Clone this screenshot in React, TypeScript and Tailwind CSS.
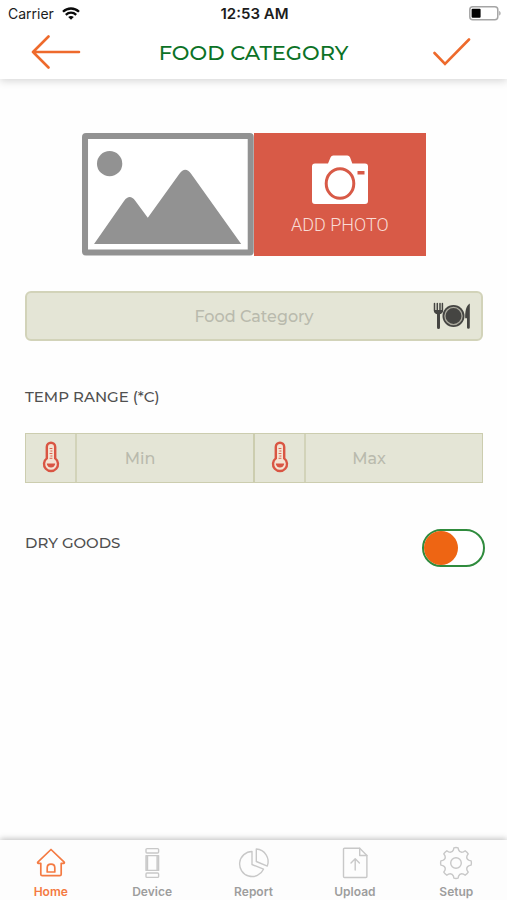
import React, { useState } from 'react';

const TABS = ['Home', 'Device', 'Report', 'Upload', 'Setup'] as const;
type Tab = (typeof TABS)[number];

/** Outline of an eight-tooth cog centred in a 34x34 box. */
const cogPath = (() => {
  const at = (deg: number, r: number) => {
    const a = ((deg - 90) * Math.PI) / 180;
    return `${(17 + r * Math.cos(a)).toFixed(2)} ${(17 + r * Math.sin(a)).toFixed(2)}`;
  };
  let d = `M${at(-8, 15.3)}`;
  for (let i = 0; i < 8; i++) {
    const t = i * 45;
    d += `Q${at(t, 15.7)} ${at(t + 8, 15.3)}L${at(t + 11, 13.4)}Q${at(t + 22.5, 10.6)} ${at(t + 34, 13.4)}L${at(t + 37, 15.3)}`;
  }
  return d + 'Z';
})();

const TabIcon: React.FC<{ tab: Tab }> = ({ tab }) => (
  <svg width="34" height="34" viewBox="0 0 34 34" fill="none" stroke="currentColor" strokeWidth="1.4" strokeLinejoin="round" strokeLinecap="round" aria-hidden="true">
    {tab === 'Home' && (
      <g strokeWidth="1.7">
        <path d="M17 3.5 3.8 16.2c-.4.4-.1 1.1.5 1.1h2.5v10.9c0 .9.6 1.5 1.5 1.5h17.4c.9 0 1.5-.6 1.5-1.5V17.3h2.5c.6 0 .9-.7.5-1.1Z" />
        <path d="M13.2 26v-4.3c0-2 1.6-3.5 3.8-3.5s3.8 1.5 3.8 3.5V26Z" />
      </g>
    )}
    {tab === 'Device' && (
      <>
        <rect x="11" y="2.6" width="12.6" height="4.4" rx="1" />
        <path d="M11 9.6h12.6v14.8H11ZM12.5 10v14M22.1 10v14" />
        <rect x="11" y="27" width="12.6" height="4.4" rx="1" />
      </>
    )}
    {tab === 'Report' && (
      <>
        <path d="M15 5.5v13l11.5 4.7A12.5 12.5 0 1 1 15 5.5Z" />
        <path d="M19.3 3v12.5l11 4.6A12.6 12.6 0 0 0 19.3 3Z" />
      </>
    )}
    {tab === 'Upload' && (
      <>
        <path d="M6.5 2.2h15.2l7.2 7.3v21c0 .6-.5 1-1 1H6.5c-.6 0-1-.4-1-1V3.2c0-.6.4-1 1-1Z" />
        <path d="M21.7 2.2v7.3h7.2M17.2 24V13M13 17l4.2-4.2 4.2 4.2" />
      </>
    )}
    {tab === 'Setup' && (
      <>
        <path d={cogPath} />
        <circle cx="17" cy="17" r="5.3" />
      </>
    )}
  </svg>
);

const Thermometer = () => (
  <svg width="18" height="33" viewBox="0 0 18 33" fill="none" aria-hidden="true">
    <path d="M4.8 17.4V5.9a4.2 4.2 0 0 1 8.4 0v11.5a7 7 0 1 1-8.4 0Z" fill="#f3e3d3" stroke="#d95543" strokeWidth="2.4" />
    <path d="M7.6 7.5h2.8M8.4 10h2M7.6 12.5h2.8M8.4 15h2M7.6 17.3h2.8" stroke="#d95543" strokeWidth="0.9" />
    <path d="M4.8 22.4h8.4a4.2 4.2 0 0 1-8.4 0Z" fill="#d95543" />
  </svg>
);

const Cutlery = () => (
  <svg width="38" height="28" viewBox="0 0 38 28" className="shrink-0" aria-hidden="true">
    <path d="M1.5 1.5v7.2c0 1.3.8 2 1.8 2.4M4.3 1.5v8M7 1.5v8M9.4 1.5v7.2c0 1.3-.8 2-1.8 2.4" fill="none" stroke="#454542" strokeWidth="1.5" strokeLinecap="round" />
    <path d="M1.4 8h8.2c0 2.6-1.5 3.8-2.6 4.2v13.2a1.5 1.5 0 0 1-3 0V12.2C2.9 11.8 1.4 10.6 1.4 8Z" fill="#454542" />
    <circle cx="20.5" cy="14" r="11" fill="#454542" />
    <circle cx="20.5" cy="14" r="8.6" fill="none" stroke="#aaa99d" strokeWidth="1.3" />
    <path d="M36.8 1.4v24a1.4 1.4 0 0 1-2.8 0v-9.2h-1.8c-.2-6.8.9-12.8 4.6-14.8Z" fill="#454542" />
  </svg>
);

const TempField: React.FC<{ label: string; value: string; onChange: (v: string) => void }> = ({ label, value, onChange }) => (
  <label className="flex h-12 min-w-0 flex-1">
    <span className="flex w-[51px] shrink-0 items-center justify-center border-r-2 border-[#d2d3b9]">
      <Thermometer />
    </span>
    <input
      aria-label={label}
      inputMode="numeric"
      placeholder={label}
      value={value}
      onChange={(e) => onChange(e.target.value)}
      className="w-full min-w-0 bg-transparent pt-0.5 pr-[50px] text-center text-base font-medium text-[#55554f] outline-none placeholder:text-[#b9baad]"
    />
  </label>
);

export default function App() {
  const [category, setCategory] = useState('');
  const [min, setMin] = useState('');
  const [max, setMax] = useState('');
  const [dryGoods, setDryGoods] = useState(false);
  const [tab, setTab] = useState<Tab>('Home');

  return (
    <div className="flex min-h-screen flex-col bg-[#fefefe] font-['Montserrat','Inter',sans-serif]">
      <header className="bg-white shadow-[0_2px_8px_rgba(0,0,0,0.16)]">
        <div className="grid h-[27px] grid-cols-3 items-center pr-1.5 pl-2 font-['Inter',sans-serif] text-sm text-[#1c1c1c]">
          <div className="flex items-center gap-2">
            <span>Carrier</span>
            <svg width="18" height="13" viewBox="0 0 18 13" fill="none" stroke="#0a0a0a" strokeWidth="2.3" aria-hidden="true">
              <path d="M1 4.8c4.5-4.4 11.5-4.4 16 0M3.8 7.8c3-2.8 7.4-2.8 10.4 0" />
              <path d="M6.2 10.1c1.7-1.4 3.9-1.4 5.6 0L9 12.8Z" fill="#0a0a0a" stroke="none" />
            </svg>
          </div>
          <span className="whitespace-nowrap text-center text-[15px] font-semibold">12:53 AM</span>
          <svg className="justify-self-end" width="32" height="15" viewBox="0 0 32 15" aria-hidden="true">
            <rect x="0.8" y="0.8" width="28" height="13" rx="3" fill="#fff" stroke="#a5a5a5" strokeWidth="1.5" />
            <rect x="2.6" y="2.8" width="9" height="9" rx="1" fill="#000" />
            <path d="M30.2 5v4.6c1-.4 1.4-1.2 1.4-2.3S31.2 5.4 30.2 5Z" fill="#a5a5a5" />
          </svg>
        </div>
        <div className="flex h-[52px] items-center justify-between px-[30px]">
          <button type="button" aria-label="Back" className="flex w-[52px] justify-start">
            <svg width="52" height="36" viewBox="0 0 52 36" fill="none" stroke="#ee6a2c" strokeWidth="2.6" strokeLinecap="round" strokeLinejoin="round">
              <path d="M49 17H3M18.5 1.5 3 17l15.5 15.5" />
            </svg>
          </button>
          <h1 className="whitespace-nowrap text-[21px] leading-7 font-medium text-[#0c7226]">FOOD CATEGORY</h1>
          <button type="button" aria-label="Save" className="flex w-[52px] justify-center">
            <svg width="40" height="30" viewBox="0 0 40 30" fill="none" stroke="#ee6a2c" strokeWidth="2.6" strokeLinecap="round">
              <path d="m3.5 15 10.5 11L38 1.5" />
            </svg>
          </button>
        </div>
      </header>

      <main className="flex-1 pr-6 pl-[25px]">
        <div className="mx-auto mt-[54px] flex w-3/4 max-w-[600px]">
          <svg className="min-w-0 flex-1" viewBox="0 0 171 122" role="img" aria-label="No photo selected">
            <rect x="3" y="3" width="165" height="116" rx="1" fill="#fff" stroke="#929292" strokeWidth="6" strokeLinejoin="round" />
            <circle cx="27.5" cy="30.5" r="12.6" fill="#929292" />
            <path d="M12 110.5 42 67.5q5.500-7.500 11 0l12.500 17L97 40.500q5.800-8 11.600 0L158.500 110.500Z" fill="#929292" />
          </svg>
          <button type="button" className="flex min-w-0 flex-1 flex-col items-center justify-center gap-1.5 bg-[#d85a47] pt-1.5">
            <svg width="58" height="50" viewBox="0 0 58 50" aria-hidden="true">
              <path d="M4 8.5h13l2.5-6q.8-2 2.8-2h14q2 0 2.8 2l2.2 6H54q3 0 3 3V46q0 3-3 3H4q-3 0-3-3V11.5q0-3 3-3Z" fill="#fff" />
              <ellipse cx="29" cy="28.5" rx="13.8" ry="14.8" fill="none" stroke="#d85a47" strokeWidth="3" />
              <rect x="46.5" y="16" width="7" height="3.5" fill="#d85a47" />
            </svg>
            <span className="whitespace-nowrap font-['Roboto',sans-serif] text-lg leading-7 font-light text-[#f9dcd6]">ADD PHOTO</span>
          </button>
        </div>

        <label className="mt-[35px] flex h-[50px] items-center rounded-md border-2 border-[#d2d3b9] bg-[#e4e5d6] px-2.5">
          <input
            aria-label="Food Category"
            placeholder="Food Category"
            value={category}
            onChange={(e) => setCategory(e.target.value)}
            className="w-full min-w-0 bg-transparent pt-0.5 pl-[38px] text-center text-base font-medium text-[#55554f] outline-none placeholder:text-[#b9baad]"
          />
          <Cutlery />
        </label>

        <fieldset className="mt-11">
          <legend className="text-[15px] leading-6 font-medium text-[#505050]">TEMP RANGE (*C)</legend>
          <div className="mt-6 flex divide-x-2 divide-[#cccdaf] border border-[#cccdaf] bg-[#e4e5d6]">
            <TempField label="Min" value={min} onChange={setMin} />
            <TempField label="Max" value={max} onChange={setMax} />
          </div>
        </fieldset>

        <div className="-mr-0.5 mt-[46px] flex items-start justify-between">
          <label htmlFor="dry-goods" className="text-[15px] leading-7 font-medium text-[#505050]">DRY GOODS</label>
          <input
            id="dry-goods"
            type="checkbox"
            role="switch"
            checked={dryGoods}
            onChange={(e) => setDryGoods(e.target.checked)}
            className="h-[38px] w-[63px] cursor-pointer appearance-none rounded-full border-2 border-[#2f8b3d] bg-white before:block before:size-[34px] before:rounded-full before:bg-[#ee6513] before:transition-transform checked:before:translate-x-6"
          />
        </div>
      </main>

      <nav className="flex h-[60px] bg-[#fdfdfd] font-['Inter',sans-serif] shadow-[0_-1px_6px_rgba(0,0,0,0.26)]">
        {TABS.map((t) => (
          <button
            key={t}
            type="button"
            aria-current={t === tab ? 'page' : undefined}
            onClick={() => setTab(t)}
            className={`flex flex-1 flex-col items-center gap-1 pt-1.5 ${t === tab ? 'text-[#f47a42]' : 'text-[#c8c8c8]'}`}
          >
            <TabIcon tab={t} />
            <span className={`text-xs font-semibold ${t === tab ? '' : 'text-[#9d9d9d]'}`}>{t}</span>
          </button>
        ))}
      </nav>
    </div>
  );
}
